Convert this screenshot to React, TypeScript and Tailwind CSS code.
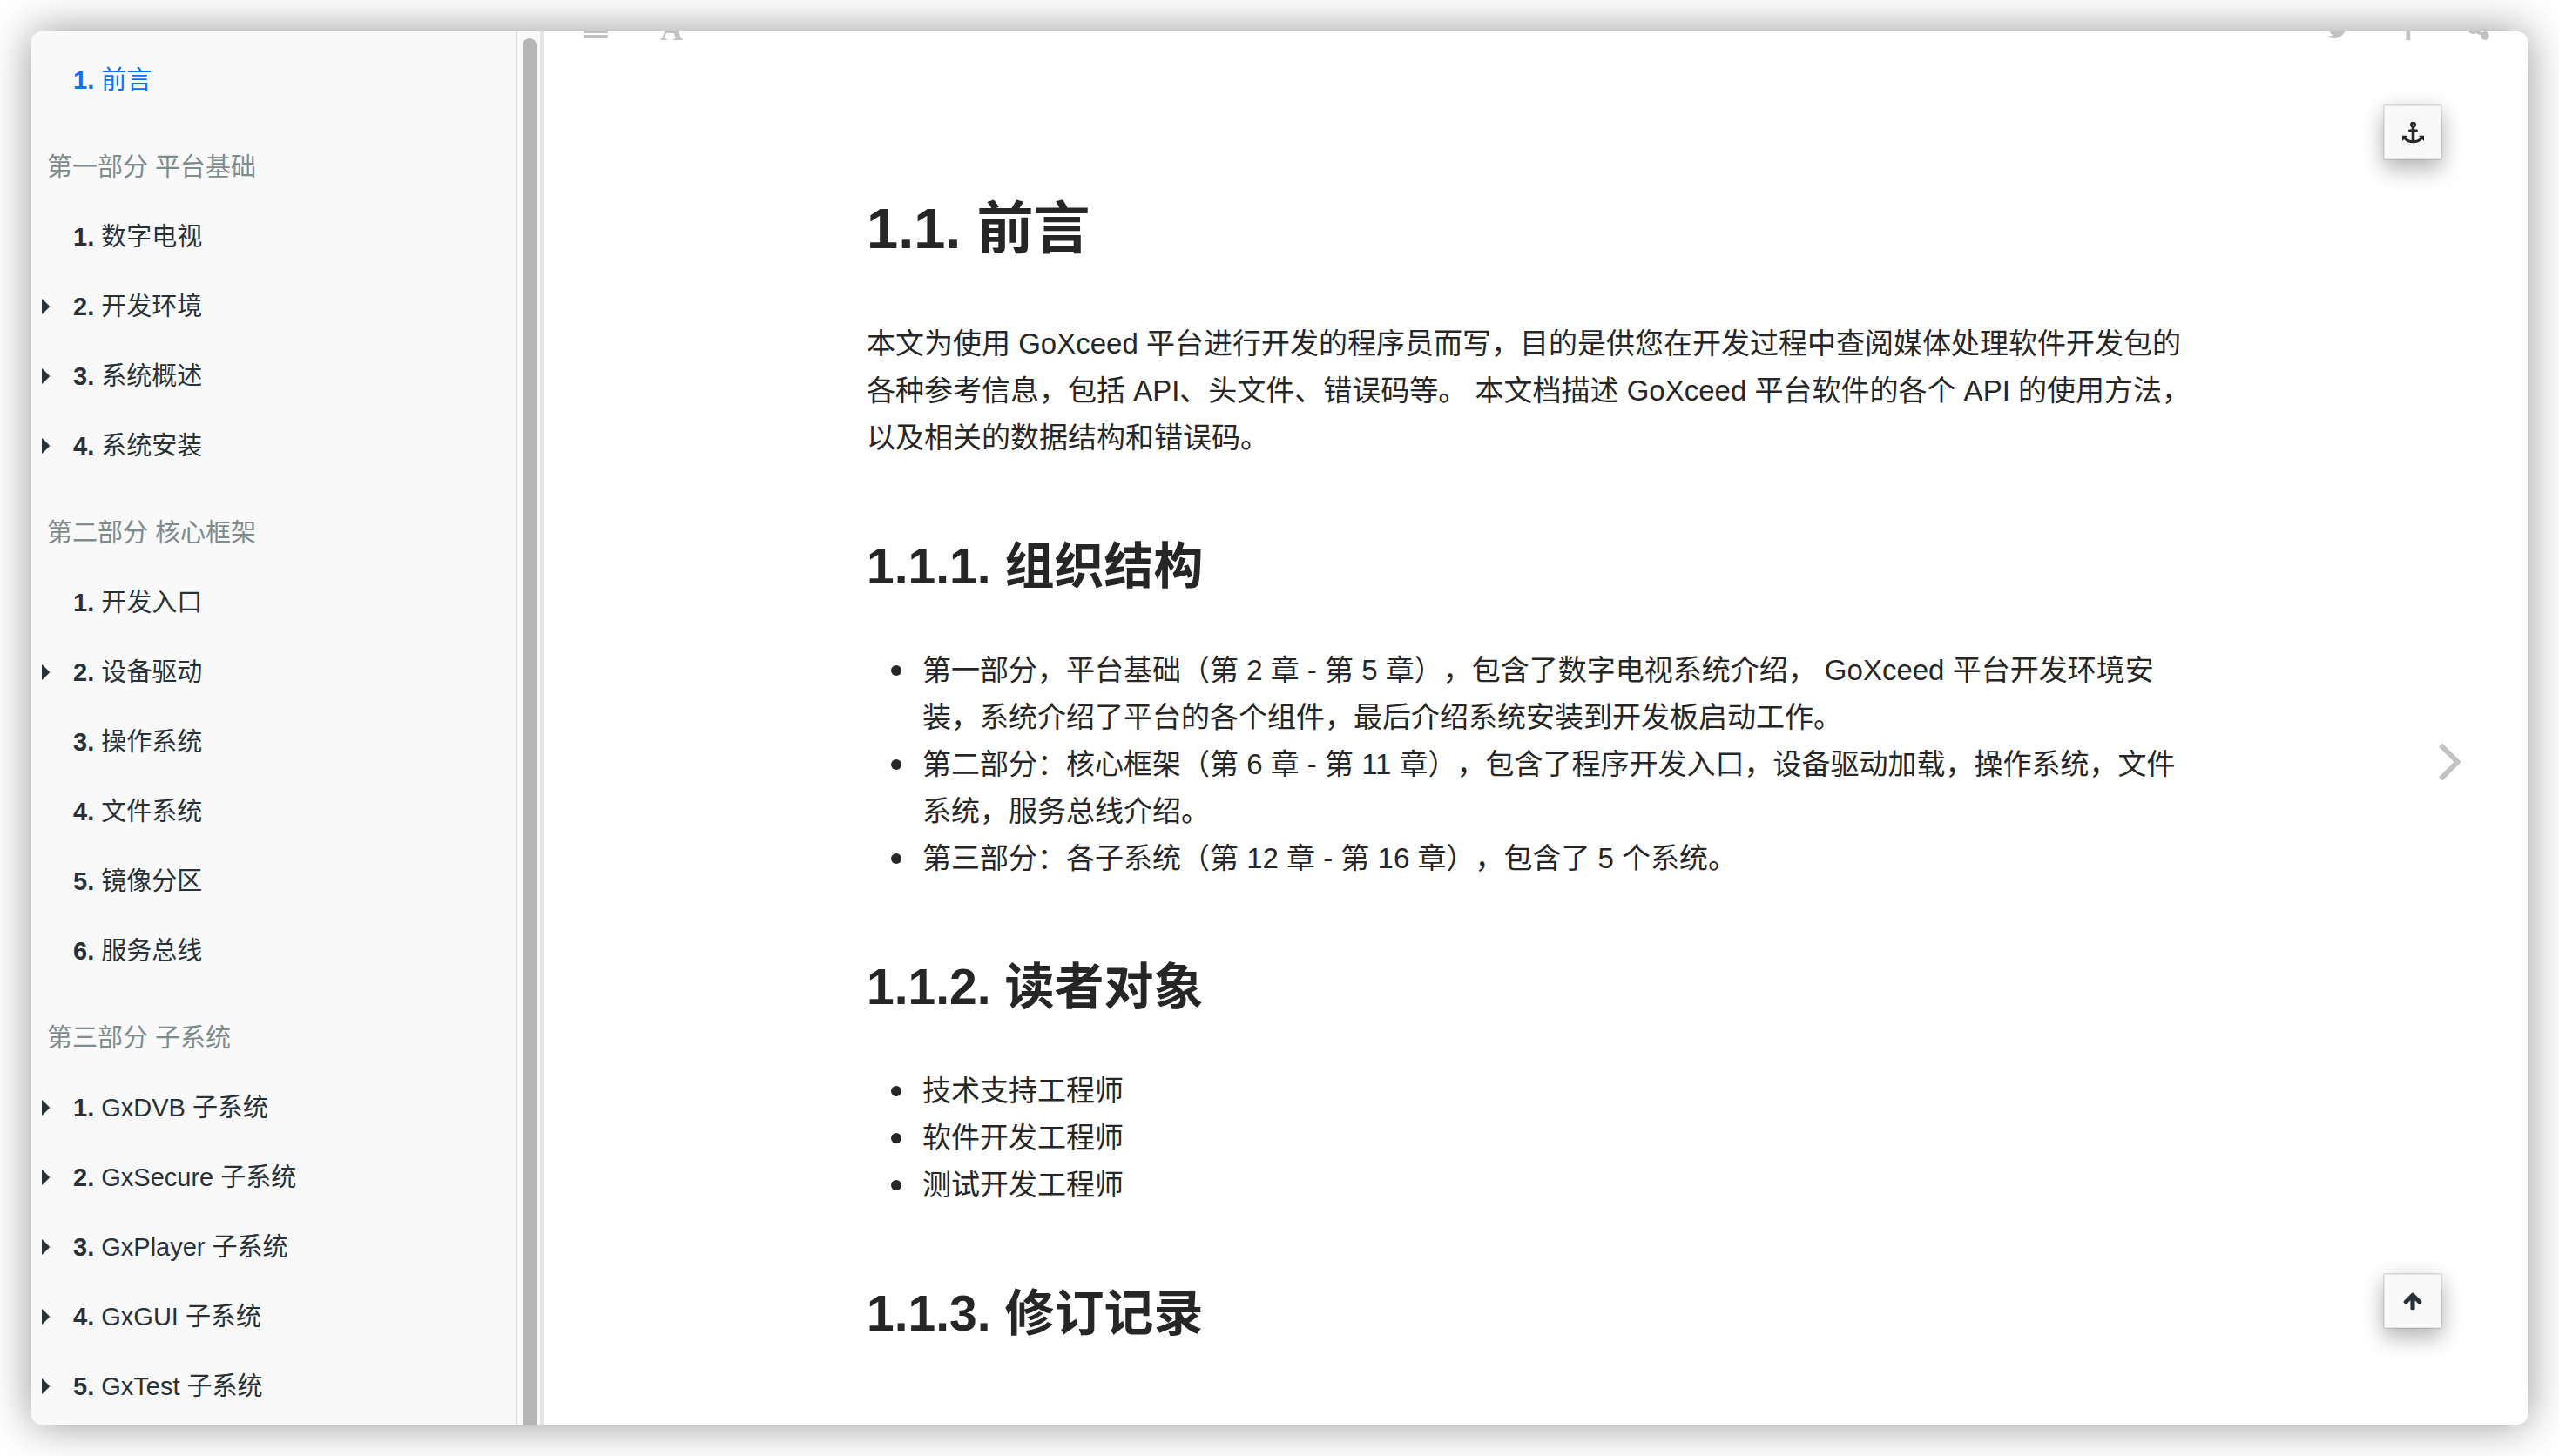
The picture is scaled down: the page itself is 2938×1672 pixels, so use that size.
import React from "react";

type Chapter = { title: string; expandable?: boolean; active?: boolean };
type Part = { heading?: string; chapters: Chapter[] };

const parts: Part[] = [
  { chapters: [{ title: "前言", active: true }] },
  {
    heading: "第一部分 平台基础",
    chapters: [
      { title: "数字电视" },
      { title: "开发环境", expandable: true },
      { title: "系统概述", expandable: true },
      { title: "系统安装", expandable: true },
    ],
  },
  {
    heading: "第二部分 核心框架",
    chapters: [
      { title: "开发入口" },
      { title: "设备驱动", expandable: true },
      { title: "操作系统" },
      { title: "文件系统" },
      { title: "镜像分区" },
      { title: "服务总线" },
    ],
  },
  {
    heading: "第三部分 子系统",
    chapters: [
      { title: "GxDVB 子系统", expandable: true },
      { title: "GxSecure 子系统", expandable: true },
      { title: "GxPlayer 子系统", expandable: true },
      { title: "GxGUI 子系统", expandable: true },
      { title: "GxTest 子系统", expandable: true },
    ],
  },
];

const icons = {
  twitter:
    "M1684 408q-67 98-162 167 1 14 1 42 0 130-38 259.5t-115.5 248.5-184.5 210.5-258 146-323 54.5q-271 0-496-145 35 4 78 4 225 0 401-138-105-2-188-64.5t-114-159.5q33 5 61 5 43 0 85-11-112-23-185.5-111.5t-73.5-205.5v-4q68 38 146 41-66-44-105-115t-39-154q0-88 44-163 121 149 294.5 238.5t371.5 99.5q-8-38-8-74 0-134 94.5-228.5t228.5-94.5q140 0 236 102 109-21 205-78-37 115-142 178 93-10 186-50z",
  facebook:
    "M1343 12v264h-157q-86 0-116 36t-30 108v189h293l-39 296h-254v759h-306v-759h-255v-296h255v-218q0-186 104-288.5t277-102.5q147 0 228 12z",
  share:
    "M1344 1024q133 0 226.5 93.5t93.5 226.5-93.5 226.5-226.5 93.5-226.5-93.5-93.5-226.5q0-12 2-34l-360-180q-92 86-218 86-133 0-226.5-93.5t-93.5-226.5 93.5-226.5 226.5-93.5q126 0 218 86l360-180q-2-22-2-34 0-133 93.5-226.5t226.5-93.5 226.5 93.5 93.5 226.5-93.5 226.5-226.5 93.5q-126 0-218-86l-360 180q2 22 2 34t-2 34l360 180q92-86 218-86z",
  anchor:
    "M960 256q0-26-19-45t-45-19-45 19-19 45 19 45 45 19 45-19 19-45zm832 896v352q0 22-20 30-8 2-12 2-12 0-23-9l-93-93q-119 143-318.5 226.5t-429.5 83.5-429.5-83.5-318.5-226.5l-93 93q-9 9-23 9-4 0-12-2-20-8-20-30v-352q0-14 9-23t23-9h352q22 0 30 20 8 19-7 35l-100 100q67 91 189.5 153.5t271.5 82.5v-647h-192q-26 0-45-19t-19-45v-128q0-26 19-45t45-19h192v-163q-58-34-93-92.5t-35-128.5q0-106 75-181t181-75 181 75 75 181q0 70-35 128.5t-93 92.5v163h192q26 0 45 19t19 45v128q0 26-19 45t-45 19h-192v647q149-20 271.5-82.5t189.5-153.5l-100-100q-15-16-7-35 8-20 30-20h352q14 0 23 9t9 23z",
  arrowUp:
    "M1675 971q0 51-37 90l-75 75q-38 38-91 38-54 0-90-38l-294-293v704q0 52-37.5 84.5t-90.5 32.5h-128q-53 0-90.5-32.5t-37.5-84.5v-704l-294 293q-36 38-90 38t-90-38l-75-75q-38-38-38-90 0-53 38-91l651-651q35-37 90-37 54 0 91 37l651 651q37 39 37 91z",
};

function Icon({ name, className }: { name: keyof typeof icons; className: string }) {
  return (
    <svg viewBox="0 0 1792 1792" className={className} fill="currentColor" aria-hidden="true">
      <path d={icons[name]} />
    </svg>
  );
}

function Sidebar() {
  return (
    <nav
      aria-label="目录"
      className="min-h-0 w-[558px] shrink-0 overflow-hidden border-r-2 border-[#e0e0e0] pt-4 text-[29px] leading-10 text-[#283138]"
    >
      {parts.map((part, i) => (
        <section key={i} className={i > 0 ? "mt-5" : ""}>
          {part.heading && (
            <h2 className="py-5 pl-[18px] text-[#7f8c8d]">{part.heading}</h2>
          )}
          <ul>
            {part.chapters.map((c, n) => (
              <li key={c.title} className="flex items-center pl-3">
                <span className="flex w-9 shrink-0">
                  {c.expandable && (
                    <svg viewBox="0 0 9 18" className="h-[18px] w-[9px]" fill="currentColor" aria-hidden="true">
                      <path d="M0 .5 Q.5 0 1 .7 L8.6 8.2 Q9.2 9 8.6 9.8 L1 17.3 Q.5 18 0 17.5Z" />
                    </svg>
                  )}
                </span>
                <a href="#" className={c.active ? "py-5 text-[#0a70ff]" : "py-5"}>
                  <b>{n + 1}.</b> {c.title}
                </a>
              </li>
            ))}
          </ul>
        </section>
      ))}
    </nav>
  );
}

function Toolbar() {
  return (
    <header className="flex h-3 items-end justify-between pr-[42px] pl-[46px] text-[#c1c1c1]">
      <div className="flex items-end gap-[60px]">
        <button aria-label="目录" className="mb-1">
          <svg viewBox="0 0 28 22" className="h-[22px] w-7" fill="currentColor" aria-hidden="true">
            <rect width="28" height="4" rx="1" />
            <rect y="6" width="28" height="4" rx="1" />
            <rect y="12" width="28" height="4" rx="1" />
            <rect y="18" width="28" height="4" rx="1" />
          </svg>
        </button>
        <button aria-label="字体" className="-mb-1 font-['Liberation_Serif',serif] text-4xl leading-none font-bold">
          A
        </button>
      </div>
      <div className="flex items-end gap-[53px]">
        <button aria-label="Twitter"><Icon name="twitter" className="size-7" /></button>
        <button aria-label="Facebook"><Icon name="facebook" className="size-7" /></button>
        <button aria-label="分享"><Icon name="share" className="size-7" /></button>
      </div>
    </header>
  );
}

function BulletItem({ children }: { children: React.ReactNode }) {
  return (
    <li className="relative before:absolute before:top-[21px] before:-left-9 before:size-3 before:rounded-full before:bg-current">
      {children}
    </li>
  );
}

const squareButton =
  "absolute right-[98px] flex h-16 w-[68px] items-center justify-center rounded-xs border-2 border-black/10 bg-[#f9f9f9] bg-clip-padding shadow-[0_12px_24px_rgba(0,0,0,0.24),0_0_24px_rgba(0,0,0,0.08)]";

const h2Class = "mt-[88px] mb-[61px] text-[57px] leading-[64px] font-bold";
const listClass = "pl-16";

export default function App() {
  return (
    <div className="h-screen bg-white p-9 font-['Liberation_Sans','Noto_Sans_CJK_SC',sans-serif]" lang="zh-CN">
      <div className="flex h-full overflow-hidden rounded-xl bg-white shadow-[0_0_50px_rgba(0,0,0,0.42)]">
        <aside className="flex shrink-0 border-r-4 border-[#e4e4e4] bg-[#f9f9f9]">
          <Sidebar />
          <div className="w-[26px] pt-2 pl-[6px]">
            <div className="h-full w-4 rounded-t-full bg-[#b5b5b5]" />
          </div>
        </aside>

        <main className="relative min-w-0 flex-1 overflow-hidden">
          <Toolbar />
          <article className="mx-auto max-w-[1600px] pt-[179px] pr-12 pl-8 text-[33px] leading-[54px] text-[#262626] [text-spacing-trim:space-all]">
            <h1 className="mb-[69px] text-[65px] leading-[72px] font-bold">1.1. 前言</h1>
            <p>
              本文为使用 GoXceed 平台进行开发的程序员而写，目的是供您在开发过程中查阅媒体处理软件开发包的各种参考信息，包括 API、头文件、错误码等。 本文档描述 GoXceed 平台软件的各个 API 的使用方法，以及相关的数据结构和错误码。
            </p>

            <h2 className={h2Class}>1.1.1. 组织结构</h2>
            <ul className={listClass}>
              <BulletItem>第一部分，平台基础（第 2 章 - 第 5 章），包含了数字电视系统介绍， GoXceed 平台开发环境安装，系统介绍了平台的各个组件，最后介绍系统安装到开发板启动工作。</BulletItem>
              <BulletItem>第二部分：核心框架（第 6 章 - 第 11 章），包含了程序开发入口，设备驱动加载，操作系统，文件系统，服务总线介绍。</BulletItem>
              <BulletItem>第三部分：各子系统（第 12 章 - 第 16 章），包含了 5 个系统。</BulletItem>
            </ul>

            <h2 className={h2Class}>1.1.2. 读者对象</h2>
            <ul className={listClass}>
              <BulletItem>技术支持工程师</BulletItem>
              <BulletItem>软件开发工程师</BulletItem>
              <BulletItem>测试开发工程师</BulletItem>
            </ul>

            <h2 className={h2Class}>1.1.3. 修订记录</h2>
          </article>

          <button aria-label="章节锚点" className={`${squareButton} top-[84px] text-[#262626]`}>
            <Icon name="anchor" className="size-[25px]" />
          </button>
          <a
            href="#"
            aria-label="下一页"
            className="absolute right-[76px] bottom-[738px] text-[#c3c3c3]"
          >
            <svg viewBox="0 0 27 46" className="h-[46px] w-[27px]" fill="none" stroke="currentColor" strokeWidth="6" aria-hidden="true">
              <path d="M3 3.5 L22.5 23 L3 42.5" strokeLinejoin="miter" strokeLinecap="butt" />
            </svg>
          </a>
          <button aria-label="回到顶部" className={`${squareButton} bottom-[110px] text-[#283138]`}>
            <Icon name="arrowUp" className="size-6" />
          </button>
        </main>
      </div>
    </div>
  );
}
